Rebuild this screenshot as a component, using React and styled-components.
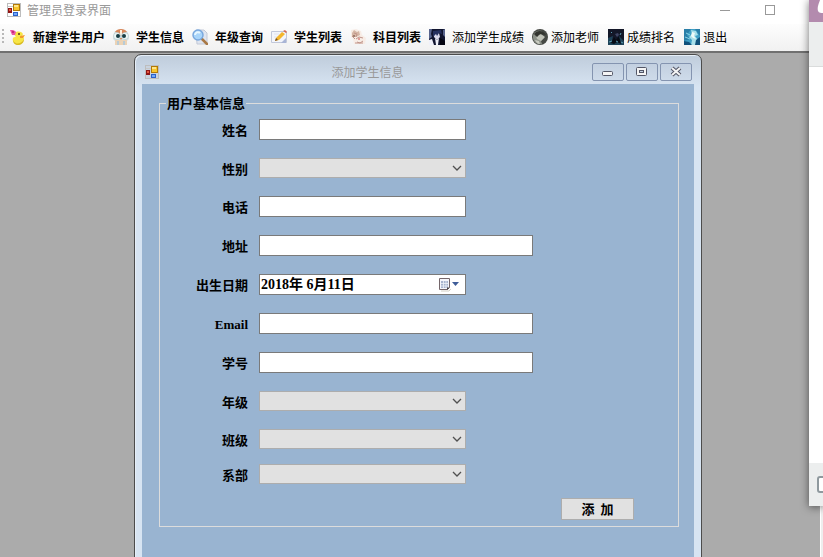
import React, { useState } from "react";
import styled, { createGlobalStyle } from "styled-components";

const GlobalStyle = createGlobalStyle`
  * {
    box-sizing: border-box;
  }

  body {
    margin: 0;
    font-family: "Noto Sans CJK SC", sans-serif;
    font-size: 12px;
    color: #000;
  }

  button,
  input,
  select {
    font: inherit;
    color: inherit;
    margin: 0;
  }
`;

// Main window
const Desktop = styled.div`
  position: relative;
  display: flex;
  flex-direction: column;
  height: 100vh;
  overflow: hidden;
  background: #fff;
`;

const TitleBar = styled.header`
  display: flex;
  align-items: center;
  height: 24px;
  padding: 0 30px 4px 7px;
  gap: 6px;
  color: #999;
`;

const WindowTitle = styled.h1`
  flex: 1;
  margin: 0;
  font-size: 12px;
  font-weight: normal;
  line-height: 20px;
`;

const CaptionButtons = styled.div`
  display: flex;
`;

const CaptionButton = styled.button`
  display: flex;
  align-items: center;
  justify-content: center;
  width: 45px;
  height: 20px;
  padding: 0;
  border: 0;
  background: none;
`;

// Toolbar
const Toolbar = styled.nav`
  display: flex;
  align-items: center;
  height: 29px;
  padding: 0 0 2px 2px;
  background: linear-gradient(#fdfdfd, #f1f1f1);
  border-bottom: 2px solid #707070;
`;

const Grip = styled.span`
  width: 2px;
  height: 15px;
  margin-right: 6px;
  background: repeating-linear-gradient(#b8b8b8 0 2px, transparent 2px 4px);
`;

const ToolButton = styled.button`
  display: flex;
  align-items: center;
  gap: ${({ $spaced }) => ($spaced ? "7px" : "3px")};
  margin-right: ${({ $spaced }) => ($spaced ? "8px" : "9px")};
  padding: 0;
  border: 0;
  background: none;
  font-weight: ${({ $bold }) => ($bold ? "bold" : "normal")};
  line-height: 18px;
  white-space: nowrap;

  svg {
    flex: none;
  }
`;

// MDI area
const Workspace = styled.main`
  flex: 1;
  min-height: 0;
  padding: 1px 121px 0 134px;
  background: #ababab;
`;

const ChildWindow = styled.section`
  min-height: 560px;
  padding: 0 7px;
  border: 1px solid #4c4c4c;
  border-radius: 7px 7px 0 0;
  background: linear-gradient(#bfccdb, #d7e4f2 32px);
  box-shadow: inset 1px 1px 0 #e6eef7;
`;

const ChildTitleBar = styled.header`
  display: flex;
  align-items: center;
  height: 29px;
  padding: 5px 2px 0 3px;
`;

const ChildTitle = styled.h2`
  flex: 1;
  margin: 0;
  padding-right: 16px;
  color: #999;
  font-size: 12px;
  font-weight: normal;
  line-height: 18px;
  text-align: center;
`;

const ChildButtons = styled.div`
  display: flex;
  gap: 2px;
`;

const ChildButton = styled.button`
  display: flex;
  align-items: center;
  justify-content: center;
  width: 32px;
  height: 18px;
  padding: 0;
  border: 1px solid #8494b0;
  border-radius: 2px;
  background: linear-gradient(#c3d0e0, #cedbea);
`;

const FormArea = styled.form`
  min-height: 528px;
  padding: 11px 15px 0 17px;
  background: #99b4d1;
  font-size: 13px;
  font-weight: bold;
`;

const Group = styled.fieldset`
  height: 432px;
  min-width: 0;
  margin: 0;
  padding: 0 44px 0 0;
  border: 1px solid #dcdcdc;
`;

const Legend = styled.legend`
  margin-left: 6px;
  padding: 0 1px;
  line-height: 16px;
`;

const Fields = styled.div`
  display: flex;
  flex-direction: column;
  gap: ${({ $tight }) => ($tight ? "15px" : "18px")};
  padding-top: ${({ $first }) => ($first ? "8px" : "18px")};
`;

const Row = styled.div`
  display: flex;
  align-items: center;
  gap: 11px;
`;

const Label = styled.label`
  width: 88px;
  padding-top: 3px;
  font-family: "Liberation Serif", "Noto Sans CJK SC", sans-serif;
  line-height: 16px;
  text-align: right;
`;

const TextInput = styled.input`
  width: ${({ $wide }) => ($wide ? "274px" : "207px")};
  height: 21px;
  padding: 0 2px;
  border: 1px solid #7a7a7a;
  border-radius: 0;
  background: #fff;
  outline: none;
`;

const SelectBox = styled.div`
  position: relative;
  display: flex;
  width: 207px;

  svg {
    position: absolute;
    top: 7px;
    right: 4px;
    pointer-events: none;
  }
`;

const Select = styled.select`
  appearance: none;
  width: 100%;
  height: 20px;
  padding: 0 20px 0 3px;
  border: 1px solid #adadad;
  border-radius: 0;
  background: #e1e1e1;
  outline: none;
`;

const DateBox = styled.div`
  display: flex;
  align-items: center;
  width: 207px;
  height: 21px;
  border: 1px solid #7a7a7a;
  background: #fff;
`;

const DateInput = styled.input`
  flex: 1;
  min-width: 0;
  height: 19px;
  padding: 0 1px 3px;
  border: 0;
  background: none;
  font-family: "Liberation Serif", "Noto Sans CJK SC", sans-serif;
  font-size: 14px;
  font-weight: bold;
  outline: none;
`;

const DateButton = styled.button`
  display: flex;
  padding: 0 4px 0 0;
  border: 0;
  background: none;
`;

const Actions = styled.div`
  display: flex;
  justify-content: flex-end;
  padding-top: 14px;
`;

const SubmitButton = styled.button`
  width: 73px;
  height: 22px;
  padding: 0;
  border: 1px solid #adadad;
  background: #e1e1e1;
  line-height: 18px;
  white-space: pre;
`;

// Neighbouring window that overlaps the right edge
const SideWindow = styled.aside`
  position: absolute;
  top: 0;
  right: 0;
  display: flex;
  flex-direction: column;
  width: 14px;
  height: 506px;
  background: #fff;
  box-shadow: 0 1px 8px rgba(0, 0, 0, 0.55);
`;

const SideTitle = styled.div`
  height: 22px;
  background: #b38bae;
`;

const SideBar = styled.div`
  height: 45px;
  background: #eceeee;
  border-bottom: 1px solid #dadcdc;
`;

const SideBody = styled.div`
  flex: 1;
`;

const SideFooter = styled.div`
  height: 43px;
  padding: 13px 0 0 8px;
  background: #eceeee;
`;

const FrameEdge = styled.div`
  position: absolute;
  right: 0;
  bottom: 0;
  width: 3px;
  height: 51px;
  background: #eee;
  border-left: 1px solid #fff;
`;

function FormIcon({ framed }) {
  return (
    <svg width="14" height="14" viewBox="0 0 14 14" shapeRendering="crispEdges" aria-hidden="true">
      <rect width="14" height="14" fill="#bdbdbd" />
      <rect x="1" y="1" width="12" height="12" fill={framed ? "#c9d3df" : "#fff"} />
      <rect x="1" y="3" width="5" height="1" fill="#c6c6c6" />
      <rect x="6" y="1" width="7" height="7" fill="#b27a08" />
      <rect x="7" y="2" width="5" height="5" fill="#f8c62d" />
      <rect x="7" y="2" width="4" height="2" fill="#ffe58a" />
      <rect x="1" y="5" width="4" height="5" fill="#8f1616" />
      <rect x="2" y="6" width="2" height="2" fill="#e5563e" />
      <rect x="6" y="9" width="5" height="4" fill="#2c61c9" />
      <rect x="7" y="10" width="3" height="2" fill="#72a8fa" />
    </svg>
  );
}

function DuckIcon() {
  return (
    <svg width="16" height="16" viewBox="0 0 16 16" aria-hidden="true">
      <path d="M5 4c2-2 6-2 8 1l-1 2 2 2c0 4-3 6-6 6-4 0-6-3-5-6 0-1 2-1 3-1-1-1-2-2-1-4z" fill="#f7e545" />
      <path d="M3 11c1 3 4 4 7 3 2-1 3-2 4-4 0 4-3 6-6 6s-5-2-5-5z" fill="#d9bb22" />
      <path d="M10 7l5-1-2 3-3 0z" fill="#f29a2a" />
      <circle cx="9" cy="5" r="1" fill="#4c3511" />
      <path d="M0 1l3 0 2 1 1 1-1 3-3 0z" fill="#ea55a5" />
      <circle cx="3" cy="3" r="1" fill="#b3226f" />
    </svg>
  );
}

function OwlIcon() {
  return (
    <svg width="16" height="16" viewBox="0 0 16 16" aria-hidden="true">
      <path d="M1 4c3-5 11-5 14 0l1 6-3 3H3L0 10z" fill="#d3e2e5" />
      <path d="M2 3c2-4 10-4 12 0l-3 1-3 3-3-3z" fill="#d98658" />
      <path d="M8 1v5" stroke="#fff0dd" strokeWidth="2" />
      <circle cx="4" cy="7" r="3.500" fill="#eef7f7" stroke="#9fb4b8" strokeWidth="0.500" />
      <circle cx="12" cy="7" r="3.500" fill="#eef7f7" stroke="#9fb4b8" strokeWidth="0.500" />
      <circle cx="5" cy="7" r="2" fill="#173c43" />
      <circle cx="11" cy="7" r="2" fill="#173c43" />
      <path d="M7 9h2l-1 2z" fill="#df7332" />
      <path d="M2 11h12v5H2z" fill="#ecd3b5" />
      <path d="M5 12v4M11 12v4" stroke="#b8cbd5" strokeWidth="2" />
    </svg>
  );
}

function SearchIcon() {
  return (
    <svg width="16" height="16" viewBox="0 0 16 16" aria-hidden="true">
      <path d="M4 1h8l3 3v11H5z" fill="#dfe5f0" stroke="#c2c8d6" />
      <path d="M10 10l5 5" stroke="#a97946" strokeWidth="2.500" strokeLinecap="round" />
      <circle cx="6" cy="6" r="5" fill="#a9d5fa" stroke="#7aa8de" strokeWidth="1.500" />
      <path d="M3 6a3 3 0 0 1 5-2" stroke="#e8f7ff" strokeWidth="2" fill="none" />
    </svg>
  );
}

function NoteIcon() {
  return (
    <svg width="16" height="16" viewBox="0 0 16 16" aria-hidden="true">
      <path d="M0.500 2.500h15v11h-15z" fill="#f3f5fb" stroke="#c2c8da" />
      <path d="M10 14l5-5v5z" fill="#a9b5d6" />
      <path d="M3 5h5M3 8h4" stroke="#e0e4ef" />
      <path d="M4 12l1-3 6-6 3 2-6 6z" fill="#f4b62d" />
      <path d="M12 2l3 2 1-1-2-2z" fill="#d66a55" />
      <path d="M4 12l1-3 2 2z" fill="#765129" />
    </svg>
  );
}

function SketchIcon() {
  return (
    <svg width="16" height="16" viewBox="0 0 16 16" aria-hidden="true">
      <path d="M1 1l5-1 5 2 1 4 4 3-1 6H4l-1-5-2-2z" fill="#f7ece5" />
      <path d="M2 4l2-3 3 2 2-1 1 4-4 2-4-1z" fill="#d5b6a5" />
      <path d="M4 4l3 1-1 3M6 10l3-2 4 1M7 13l3 1 3-2M2 7l3 3M5 14h8" stroke="#c1958a" fill="none" />
      <circle cx="9" cy="10" r="1" fill="#d8827c" />
      <circle cx="4" cy="7" r="1" fill="#8d6959" />
    </svg>
  );
}

function PortraitIcon() {
  return (
    <svg width="16" height="16" viewBox="0 0 16 16" aria-hidden="true">
      <path d="M0 0h16v16H0z" fill="#11152f" />
      <path d="M0 0h3L2 5l1 3-3 2zM14 1l2-1v8l-2-2z" fill="#59658e" />
      <path d="M5 5l5-1 1 4-3 3-3-3z" fill="#d9d9ec" />
      <path d="M4 2l8-1 1 4-3-1-2 3-1-2-3 3z" fill="#25305f" />
      <path d="M0 11l3-1 2 6H0zM6 9l2 2 2-2-1 7H7z" fill="#f0f1fa" />
      <path d="M11 9l5 3v4h-5z" fill="#050612" />
    </svg>
  );
}

function RoundIcon() {
  return (
    <svg width="16" height="16" viewBox="0 0 16 16" aria-hidden="true">
      <circle cx="8" cy="8" r="8" fill="#464944" />
      <path d="M1 8c0-5 4-7 9-6l-3 4 5 3-3 3 1 3C5 16 1 13 1 8z" fill="#8c9188" />
      <path d="M4 7l5-2 4 3-4 4-4-2z" fill="#bfc2b7" />
      <path d="M2 5c3-4 9-4 12 1L8 5 5 8z" fill="#33352f" />
      <path d="M3 11l4 1 1 3c-3 0-4-2-5-4z" fill="#c9cbc0" />
    </svg>
  );
}

function NightIcon() {
  return (
    <svg width="16" height="16" viewBox="0 0 16 16" aria-hidden="true">
      <path d="M0 0h16v16H0z" fill="#131728" />
      <path d="M0 9l5-2-1 5 5-1 2-4 5 5v4H0z" fill="#1e4257" />
      <path d="M3 14l3-6 2 3 3-4 2 8-4-2-3 2z" fill="#070b14" />
      <path d="M3 3l1 1M13 4l-1 2M1 13l3-1M13 13l2 1M8 12l2 1" stroke="#5c9db2" />
      <path d="M7 5l3-1 1 2-2 2z" fill="#3e4564" />
    </svg>
  );
}

function IceIcon() {
  return (
    <svg width="16" height="16" viewBox="0 0 16 16" aria-hidden="true">
      <path d="M0 0h16v16H0z" fill="#3f9fc5" />
      <path d="M0 0h7L3 6l3 4-6 2zM11 0h5v7z" fill="#2a7fa8" />
      <path d="M7 1l5 1 2 4-3 1 3 4-2 5H7l1-5-3-3 3-3z" fill="#a9dfea" />
      <path d="M8 3l3 1-1 3 2 3-3-1-2-2z" fill="#f0fbf8" />
      <path d="M0 12l5 1 3 3H0zM12 11l4-3v8h-5z" fill="#10517b" />
      <path d="M1 8l5 2M2 4l4 2" stroke="#8ad5e6" />
    </svg>
  );
}

function Chevron() {
  return (
    <svg width="10" height="7" viewBox="0 0 10 7" aria-hidden="true">
      <path d="M1 1l4 4 4-4" fill="none" stroke="#505050" strokeWidth="1.300" />
    </svg>
  );
}

function CalendarIcon() {
  return (
    <svg width="22" height="14" viewBox="0 0 22 14" aria-hidden="true">
      <path d="M2 13h8l2-2" stroke="#d4d0c4" fill="none" />
      <path d="M0.500 0.500h10v9l-2 2h-8z" fill="#f5f6fb" stroke="#74666a" />
      <path d="M2 3h7v7H2z" fill="#a9b5cf" />
      <path d="M4.500 3v7M7 3v7M2 5.500h7M2 8h7" stroke="#eef1f8" strokeWidth="0.800" />
      <path d="M8 12V9.500h3z" fill="#4b4345" />
      <path d="M13 4h7l-3.500 4z" fill="#3f5d99" />
    </svg>
  );
}

const tools = [
  { text: "新建学生用户", icon: DuckIcon, bold: true, spaced: true },
  { text: "学生信息", icon: OwlIcon, bold: true, spaced: true },
  { text: "年级查询", icon: SearchIcon, bold: true, spaced: true },
  { text: "学生列表", icon: NoteIcon, bold: true, spaced: true },
  { text: "科目列表", icon: SketchIcon, bold: true, spaced: true },
  { text: "添加学生成绩", icon: PortraitIcon, spaced: true },
  { text: "添加老师", icon: RoundIcon },
  { text: "成绩排名", icon: NightIcon },
  { text: "退出", icon: IceIcon },
];

function TextRow({ id, label, wide }) {
  return (
    <Row>
      <Label htmlFor={id}>{label}</Label>
      <TextInput id={id} type="text" $wide={wide} />
    </Row>
  );
}

function SelectRow({ id, label }) {
  return (
    <Row>
      <Label htmlFor={id}>{label}</Label>
      <SelectBox>
        <Select id={id} />
        <Chevron />
      </SelectBox>
    </Row>
  );
}

function App() {
  const [birthday, setBirthday] = useState("2018年 6月11日");

  return (
    <>
      <GlobalStyle />
      <Desktop>
        <TitleBar>
          <FormIcon />
          <WindowTitle>管理员登录界面</WindowTitle>
          <CaptionButtons>
            <CaptionButton type="button" aria-label="最小化">
              <svg width="11" height="11" viewBox="0 0 11 11">
                <path d="M0 5.500h10" stroke="#999" />
              </svg>
            </CaptionButton>
            <CaptionButton type="button" aria-label="最大化">
              <svg width="11" height="11" viewBox="0 0 11 11">
                <rect x="0.500" y="0.500" width="9" height="9" fill="none" stroke="#999" />
              </svg>
            </CaptionButton>
          </CaptionButtons>
        </TitleBar>

        {/* Toolbar */}
        <Toolbar>
          <Grip />
          {tools.map(({ text, icon: Icon, bold, spaced }) => (
            <ToolButton key={text} type="button" $bold={bold} $spaced={spaced}>
              <Icon />
              {text}
            </ToolButton>
          ))}
        </Toolbar>

        <Workspace>
          <ChildWindow>
            <ChildTitleBar>
              <FormIcon framed />
              <ChildTitle>添加学生信息</ChildTitle>
              <ChildButtons>
                <ChildButton type="button" aria-label="最小化">
                  <svg width="12" height="12" viewBox="0 0 12 12">
                    <rect x="0.500" y="5.500" width="10" height="4" rx="1" fill="#f4f4f4" stroke="#535666" />
                  </svg>
                </ChildButton>
                <ChildButton type="button" aria-label="最大化">
                  <svg width="12" height="12" viewBox="0 0 12 12">
                    <rect x="0.500" y="1.500" width="10" height="8" rx="1" fill="#f4f4f4" stroke="#535666" />
                    <rect x="3.500" y="4.500" width="4" height="2" fill="#c3d0e0" stroke="#535666" />
                  </svg>
                </ChildButton>
                <ChildButton type="button" aria-label="关闭">
                  <svg width="12" height="12" viewBox="0 0 12 12">
                    <path d="M2 2l8 7M10 2l-8 7" stroke="#535666" strokeWidth="4" />
                    <path d="M2 2l8 7M10 2l-8 7" stroke="#f4f4f4" strokeWidth="2" />
                  </svg>
                </ChildButton>
              </ChildButtons>
            </ChildTitleBar>

            <FormArea onSubmit={(e) => e.preventDefault()}>
              <Group>
                <Legend>用户基本信息</Legend>
                <Fields $first>
                  <TextRow id="name" label="姓名" />
                  <SelectRow id="gender" label="性别" />
                  <TextRow id="phone" label="电话" />
                  <TextRow id="address" label="地址" wide />
                  <Row>
                    <Label htmlFor="birthday">出生日期</Label>
                    <DateBox>
                      <DateInput
                        id="birthday"
                        type="text"
                        value={birthday}
                        onChange={(e) => setBirthday(e.target.value)}
                      />
                      <DateButton type="button" aria-label="选择日期">
                        <CalendarIcon />
                      </DateButton>
                    </DateBox>
                  </Row>
                  <TextRow id="email" label="Email" wide />
                  <TextRow id="number" label="学号" wide />
                  <SelectRow id="grade" label="年级" />
                </Fields>
                <Fields $tight>
                  <SelectRow id="class" label="班级" />
                  <SelectRow id="department" label="系部" />
                </Fields>
                <Actions>
                  <SubmitButton type="submit">添  加</SubmitButton>
                </Actions>
              </Group>
            </FormArea>
          </ChildWindow>
        </Workspace>

        <FrameEdge />
        <SideWindow>
          <SideTitle>
            <svg width="14" height="16" viewBox="0 0 14 16" aria-hidden="true">
              <path d="M14 0h-3c-1 3-3 7-2 11 1 2 3 2 5 2" fill="#fff" />
            </svg>
          </SideTitle>
          <SideBar />
          <SideBody />
          <SideFooter>
            <svg width="6" height="17" viewBox="0 0 6 17" aria-hidden="true">
              <rect x="1" y="1" width="12" height="15" rx="2" fill="#fff" stroke="#8f999e" strokeWidth="2" />
            </svg>
          </SideFooter>
        </SideWindow>
      </Desktop>
    </>
  );
}

export default App;
